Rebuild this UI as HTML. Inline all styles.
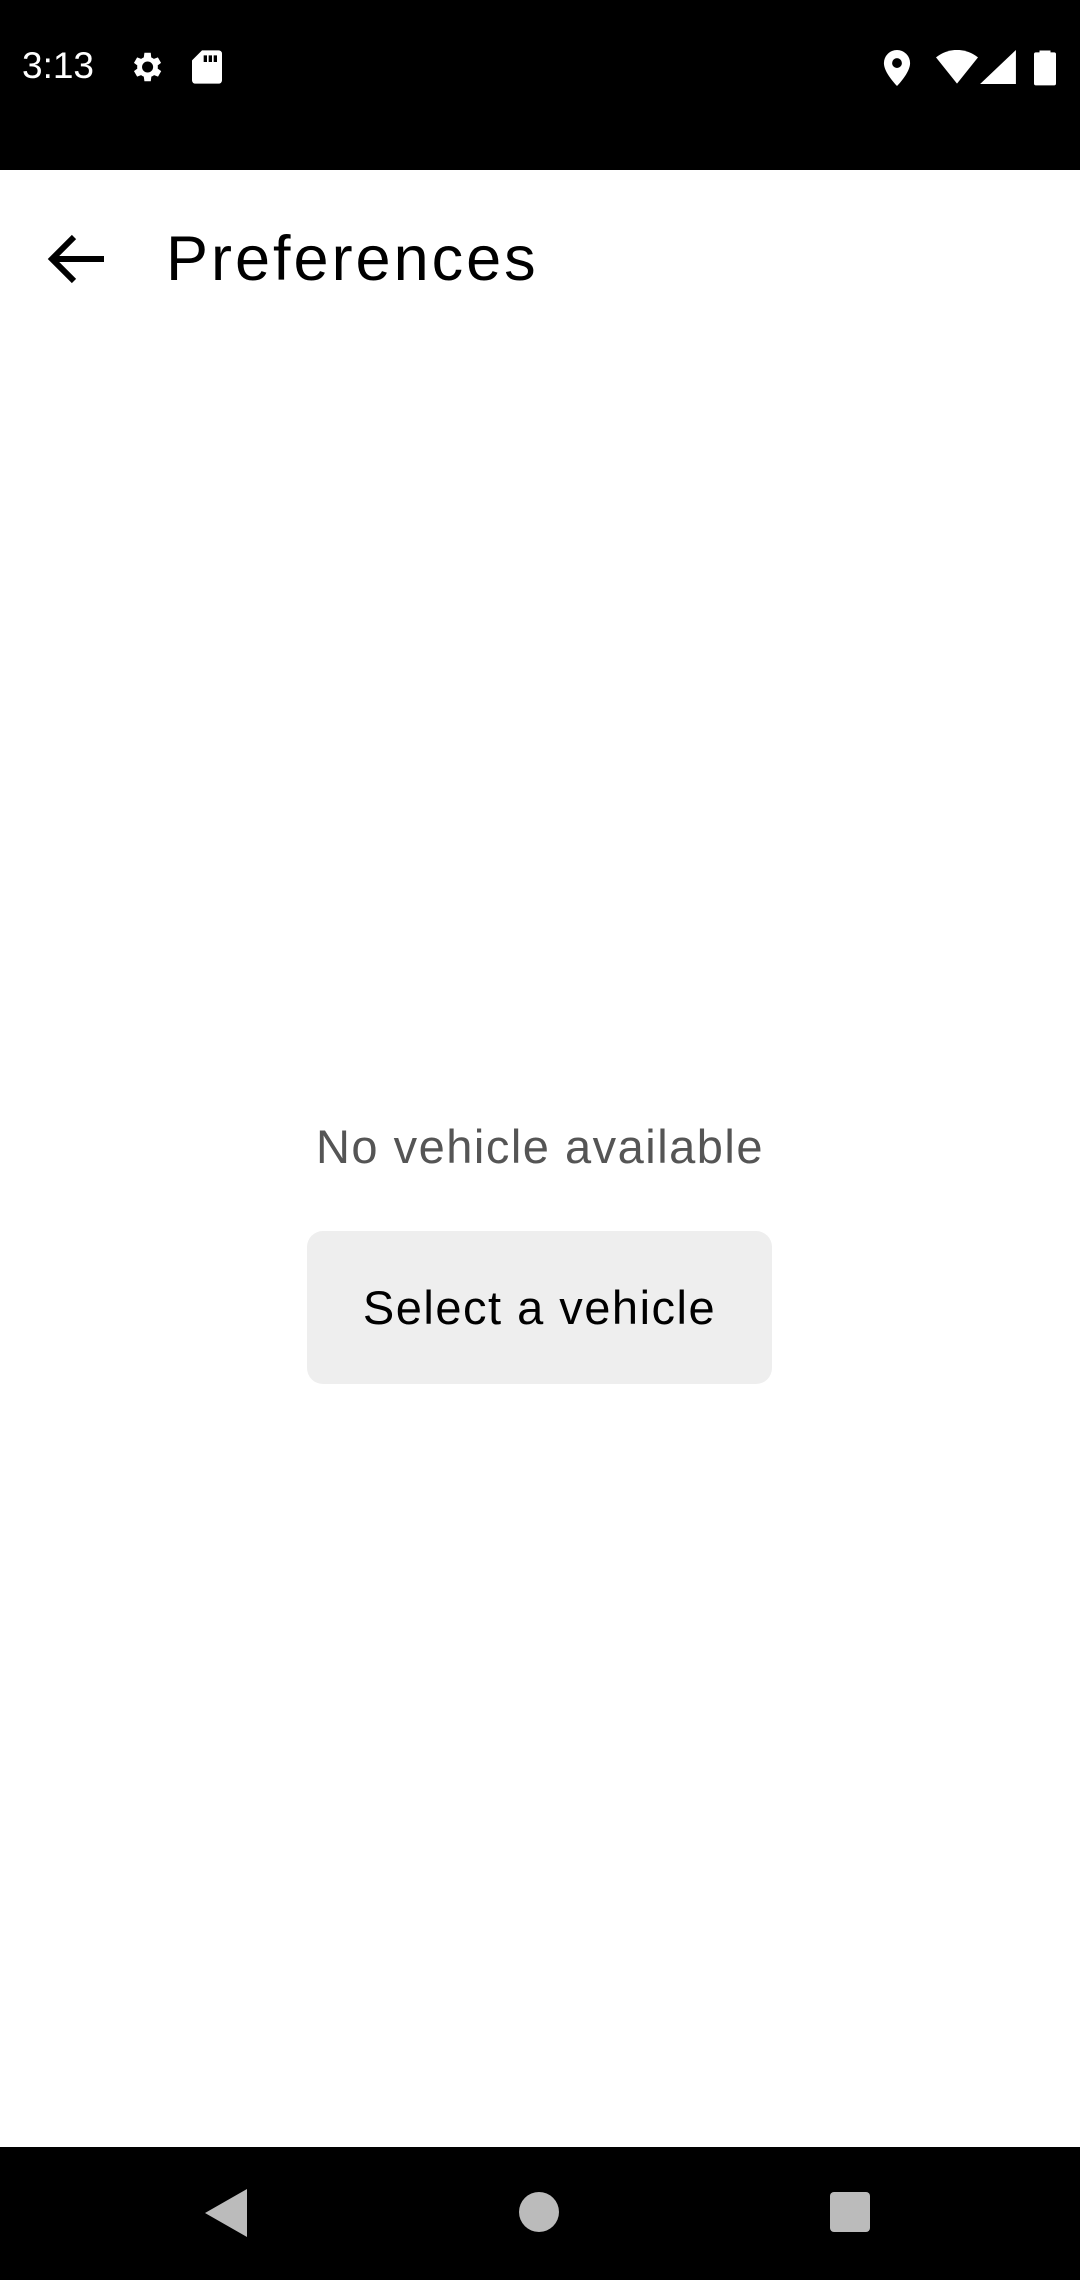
<!DOCTYPE html>
<html><head><meta charset="utf-8"><style>
*{margin:0;padding:0;box-sizing:border-box}
body{width:1080px;height:2280px;background:#fff;position:relative;overflow:hidden;font-family:"Liberation Sans",sans-serif}
.sb{position:absolute;left:0;top:0;width:1080px;height:170px;background:#000;color:#fff}
.nb{position:absolute;left:0;top:2147px;width:1080px;height:133px;background:#000}
.t{position:absolute}
</style></head><body>
<div class="sb">
<div class="t" style="left:22px;top:45px;font-size:37px;color:#fff">3:13</div>
<svg class="t" style="left:127px;top:48px" width="38" height="38" viewBox="0 0 24 24"><path fill="#fff" d="M19.4 13a7.5 7.5 0 0 0 0-2l2.1-1.6-2-3.5-2.5 1a7 7 0 0 0-1.7-1L15 3h-4l-.4 2.9a7 7 0 0 0-1.7 1l-2.5-1-2 3.5L6.5 11a7.5 7.5 0 0 0 0 2l-2.1 1.6 2 3.5 2.5-1a7 7 0 0 0 1.7 1L11 21h4l.4-2.9a7 7 0 0 0 1.7-1l2.5 1 2-3.5zM13 15.5a3.5 3.5 0 1 1 0-7 3.5 3.5 0 0 1 0 7z"/></svg>
<svg class="t" style="left:192px;top:50px" width="30" height="34" viewBox="0 0 18 20"><path fill="#fff" d="M6 0h10a2 2 0 0 1 2 2v16a2 2 0 0 1-2 2H2a2 2 0 0 1-2-2V6z"/><path fill="#000" d="M7 3h2v4H7zM10 3h2v4h-2zM13 3h2v4h-2z"/></svg>
<svg class="t" style="left:883px;top:50px" width="28" height="36" viewBox="0 0 16 22"><path fill="#fff" d="M8 0a8 8 0 0 0-8 8c0 6 8 14 8 14s8-8 8-14a8 8 0 0 0-8-8zm0 11a3 3 0 1 1 0-6 3 3 0 0 1 0 6z"/></svg>
<svg class="t" style="left:936px;top:50px" width="42" height="34" viewBox="0 0 24 19"><path fill="#fff" d="M12 19L0 4a19 19 0 0 1 24 0z"/></svg>
<svg class="t" style="left:980px;top:50px" width="36" height="34" viewBox="0 0 20 19"><path fill="#fff" d="M20 0v19H0z"/></svg>
<svg class="t" style="left:1034px;top:48px" width="22" height="38" viewBox="0 0 12 20"><path fill="#fff" d="M3 1h6v1h2a1 1 0 0 1 1 1v16a1 1 0 0 1-1 1H1a1 1 0 0 1-1-1V3a1 1 0 0 1 1-1h2z"/></svg>
</div>
<svg class="t" style="left:46px;top:234px" width="60" height="50" viewBox="0 0 60 50"><path d="M58 25H6M28 3L6 25l22 22" stroke="#000" stroke-width="6" fill="none"/></svg>
<div class="t" style="left:166px;top:222px;font-size:63px;color:#000;line-height:74px;letter-spacing:3px">Preferences</div>
<div class="t" style="left:0;width:1080px;top:1118px;text-align:center;font-size:47px;color:#555;line-height:58px;letter-spacing:1.5px">No vehicle available</div>
<div class="t" style="left:307px;top:1231px;width:465px;height:153px;background:#eeeeee;border-radius:16px;text-align:center;line-height:153px;font-size:47px;color:#000;letter-spacing:1.5px">Select a vehicle</div>
<div class="nb">
<svg class="t" style="left:205px;top:42px" width="42" height="48" viewBox="0 0 42 48"><path fill="#bbb" d="M42 0v48L0 24z"/></svg>
<div class="t" style="left:519px;top:45px;width:40px;height:40px;border-radius:50%;background:#bbb"></div>
<div class="t" style="left:830px;top:45px;width:40px;height:40px;border-radius:4px;background:#bbb"></div>
</div>
</body></html>
